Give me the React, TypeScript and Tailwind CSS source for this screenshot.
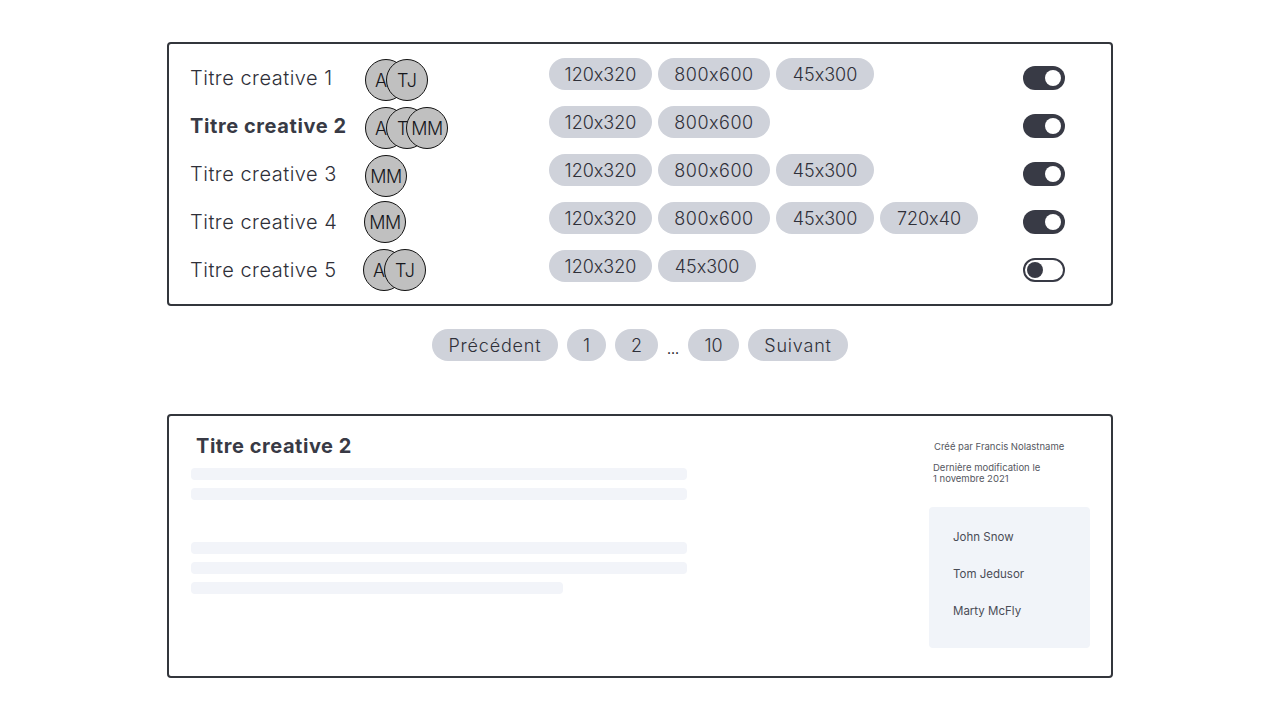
import React from "react";

type Row = {
  title: string;
  bold?: boolean;
  avatars: string[];
  avatarClass: string;
  chips: string[];
  on: boolean;
};

const rows: Row[] = [
  { title: "Titre creative 1", avatars: ["A", "TJ"], avatarClass: "ml-0 mt-1", chips: ["120x320", "800x600", "45x300"], on: true },
  { title: "Titre creative 2", bold: true, avatars: ["A", "TJ", "MM"], avatarClass: "ml-0 mt-1", chips: ["120x320", "800x600"], on: true },
  { title: "Titre creative 3", avatars: ["MM"], avatarClass: "ml-0 mt-1", chips: ["120x320", "800x600", "45x300"], on: true },
  { title: "Titre creative 4", avatars: ["MM"], avatarClass: "-ml-px", chips: ["120x320", "800x600", "45x300", "720x40"], on: true },
  { title: "Titre creative 5", avatars: ["A", "TJ"], avatarClass: "-ml-0.5", chips: ["120x320", "45x300"], on: false },
];

const chipWidths: Record<string, string> = {
  "120x320": "w-[103px]",
  "800x600": "w-[112px] tracking-[0.5px]",
  "45x300": "w-[98px]",
  "720x40": "w-[98px]",
};

function Chip({ label, className }: { label: string; className: string }) {
  return (
    <span className={`flex h-8 items-center justify-center rounded-2xl bg-[#cfd2da] text-[18px] font-light text-[#2f3039] ${className}`}>
      {label}
    </span>
  );
}

function Toggle({ on }: { on: boolean }) {
  if (on) {
    return (
      <div className="flex h-6 w-[42px] items-center justify-end rounded-full bg-[#383a45] pr-1">
        <div className="size-4 rounded-full bg-white" />
      </div>
    );
  }
  return (
    <div className="flex h-6 w-[42px] items-center rounded-full border-2 border-[#383a45] bg-white pl-0.5">
      <div className="size-4 rounded-full bg-[#383a45]" />
    </div>
  );
}

function Avatars({ names, className }: { names: string[]; className: string }) {
  return (
    <div className={`flex ${className}`}>
      {names.map((n, i) => (
        <div
          key={n}
          className={`flex size-[42px] items-center justify-center overflow-hidden rounded-full border border-[#111] bg-[#c0c0c0] text-[18px] font-light text-[#15161b] ${i === 1 ? "-ml-[21px]" : ""} ${i === 2 ? "-ml-[22px]" : ""} ${n === "A" ? "pr-2.5" : ""} ${n === "MM" ? "tracking-[-0.4px]" : ""}`}
        >
          {n}
        </div>
      ))}
    </div>
  );
}

export default function App() {
  return (
    <div className="min-h-screen bg-white pt-[42px] font-['Inter',sans-serif] text-[#383a45] [font-feature-settings:'calt'_0]">
      <div className="mx-auto w-[946px]">
        <section className="h-[264px] rounded border-2 border-[#33363c] px-[22px] py-2.5">
          {rows.map((r) => (
            <div key={r.title} className="flex h-12 items-center">
              <div className={`-ml-px w-[175px] text-[20px] ${r.bold ? "font-bold tracking-[0.6px]" : "font-light tracking-[0.5px] text-[#2f3039]"}`}>{r.title}</div>
              <div className="w-[184px]">
                <Avatars names={r.avatars} className={r.avatarClass} />
              </div>
              <div className="mb-2 flex w-[474px] gap-1.5">
                {r.chips.map((c) => (
                  <Chip key={c} label={c} className={chipWidths[c]} />
                ))}
              </div>
              <Toggle on={r.on} />
            </div>
          ))}
        </section>

        <nav className="mt-[23px] flex items-center justify-center gap-[9px]">
          <Chip label="Précédent" className="w-[126px] tracking-[0.8px]" />
          <Chip label="1" className="w-[39px]" />
          <Chip label="2" className="w-[43px]" />
          <span className="mt-2 text-[14px] leading-none text-black">...</span>
          <Chip label="10" className="w-[51px]" />
          <Chip label="Suivant" className="w-[100px] tracking-[0.8px]" />
        </nav>

        <section className="mt-[53px] flex h-[264px] justify-between rounded border-2 border-[#33363c] pb-7 pl-[22px] pr-[21px]">
          <div className="w-[496px]">
            <h2 className="ml-[5px] mt-[18px] text-[20px] font-bold leading-[24px] tracking-[0.55px]">Titre creative 2</h2>
            <div className="mt-[10px] flex flex-col gap-2">
              <div className="h-3 rounded-sm bg-[#f2f4f9]" />
              <div className="h-3 rounded-sm bg-[#f2f4f9]" />
            </div>
            <div className="mt-[42px] flex flex-col gap-2">
              <div className="h-3 rounded-sm bg-[#f2f4f9]" />
              <div className="h-3 rounded-sm bg-[#f2f4f9]" />
              <div className="h-3 w-[372px] rounded-sm bg-[#f2f4f9]" />
            </div>
          </div>
          <aside className="flex w-[161px] flex-col">
            <p className="ml-[5px] mt-[25px] text-[9.5px] leading-[12px] text-[#555761]">Créé par Francis Nolastname</p>
            <p className="ml-1 mt-[9px] text-[9.5px] leading-[11px] text-[#555761]">
              Dernière modification le
              <br />1 novembre 2021
            </p>
            <div className="mt-[23px] flex h-[141px] flex-col gap-[22px] rounded bg-[#f1f4f9] px-6 pt-[23px] text-[11.5px] leading-[15px] text-[#4a4c56]">
              <div>John Snow</div>
              <div>Tom Jedusor</div>
              <div>Marty McFly</div>
            </div>
          </aside>
        </section>
      </div>
    </div>
  );
}
